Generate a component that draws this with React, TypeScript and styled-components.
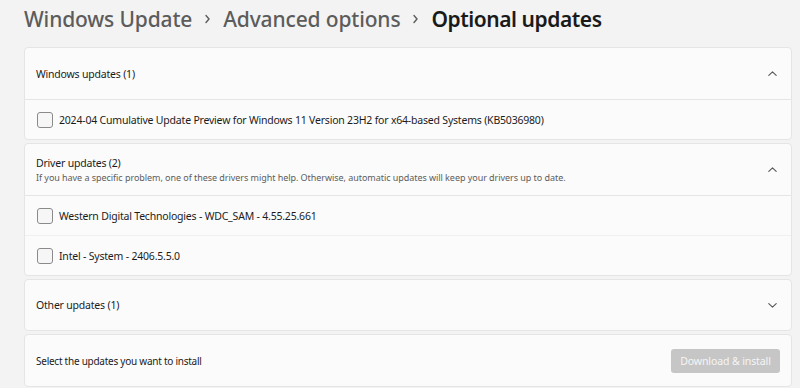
import styled, { createGlobalStyle } from "styled-components";

const GlobalStyle = createGlobalStyle`
  html, body {
    margin: 0;
    padding: 0;
    background: #f3f3f3;
  }
  body {
    font-family: "Noto Sans", "Open Sans", sans-serif;
    color: #1b1b1b;
  }
`;

const Page = styled.div`
  width: 800px;
  height: 388px;
  overflow: hidden;
  box-sizing: border-box;
  padding: 0 8px 0 24px;
  display: flex;
  flex-direction: column;
  gap: 3px;
  & > * {
    flex-shrink: 0;
  }
`;

const Breadcrumb = styled.h1`
  margin: 0;
  height: 44px;
  display: flex;
  align-items: center;
  gap: 12px;
  font-size: 21px;
  font-weight: 500;
  padding-bottom: 6px;
  box-sizing: border-box;
`;

const Crumb = styled.span<{ $current?: boolean }>`
  color: ${(p) => (p.$current ? "#1a1a1a" : "#5c5c5c")};
  font-weight: ${(p) => (p.$current ? 600 : 500)};
  letter-spacing: ${(p) => (p.$current ? "-0.45px" : "-0.15px")};
`;

const Separator = styled.span`
  display: flex;
  align-items: center;
`;

const Card = styled.section`
  background: #fbfbfb;
  border: 1px solid #e5e5e5;
  border-radius: 4px;
  box-sizing: border-box;
`;

const CardHeader = styled.div<{ $open?: boolean; $height: number }>`
  height: ${(p) => p.$height}px;
  display: flex;
  align-items: center;
  justify-content: space-between;
  padding: 0 14px 0 11px;
  box-sizing: border-box;
  border-bottom: ${(p) => (p.$open ? "1px solid #e5e5e5" : "none")};
`;

const HeaderText = styled.div`
  display: flex;
  flex-direction: column;
  gap: 1px;
`;

const Title = styled.div`
  font-size: 10.5px;
  letter-spacing: -0.2px;
  color: #1b1b1b;
`;

const Subtitle = styled.div`
  font-size: 9px;
  letter-spacing: -0.05px;
  color: #5d5d5d;
`;

const Row = styled.label`
  height: 39px;
  display: flex;
  align-items: center;
  gap: 6px;
  padding: 0 12px;
  font-size: 10.5px;
  letter-spacing: -0.2px;
  color: #1b1b1b;
  & + & {
    border-top: 1px solid #f0f0f0;
  }
`;

const Box = styled.span`
  width: 14px;
  height: 14px;
  border: 1px solid #8a8a8a;
  border-radius: 3px;
  background: #f6f6f6;
  flex-shrink: 0;
`;

const Footer = styled.div`
  height: 51px;
  display: flex;
  align-items: center;
  justify-content: space-between;
  padding: 0 11px;
  font-size: 10px;
  letter-spacing: -0.25px;
  color: #1b1b1b;
`;

const Button = styled.button`
  width: 109px;
  height: 24px;
  margin-top: 1px;
  border: none;
  border-radius: 3px;
  background: #c6c6c6;
  color: #f5f5f5;
  font-family: inherit;
  font-size: 10.5px;
  letter-spacing: -0.1px;
  padding: 0;
`;

function Chevron({ up }: { up: boolean }) {
  return (
    <svg width="9" height="5" viewBox="0 0 9 5" fill="none">
      <path
        d={up ? "M0.8 4.3 L4.5 0.8 L8.2 4.3" : "M0.8 0.7 L4.5 4.2 L8.2 0.7"}
        stroke="#555"
        strokeWidth="1.1"
        strokeLinecap="round"
        strokeLinejoin="round"
      />
    </svg>
  );
}

function Arrow() {
  return (
    <svg width="7" height="10" viewBox="0 0 7 10" fill="none">
      <path d="M2 1.5 L5 5 L2 8.5" stroke="#5c5c5c" strokeWidth="1.4" strokeLinecap="round" strokeLinejoin="round" />
    </svg>
  );
}

type Section = {
  title: string;
  subtitle?: string;
  open: boolean;
  items: string[];
};

const sections: Section[] = [
  {
    title: "Windows updates (1)",
    open: true,
    items: ["2024-04 Cumulative Update Preview for Windows 11 Version 23H2 for x64-based Systems (KB5036980)"],
  },
  {
    title: "Driver updates (2)",
    subtitle:
      "If you have a specific problem, one of these drivers might help. Otherwise, automatic updates will keep your drivers up to date.",
    open: true,
    items: ["Western Digital Technologies - WDC_SAM - 4.55.25.661", "Intel - System - 2406.5.5.0"],
  },
  { title: "Other updates (1)", open: false, items: [] },
];

export default function App() {
  return (
    <>
      <GlobalStyle />
      <Page>
        <Breadcrumb>
          <Crumb>Windows Update</Crumb>
          <Separator>
            <Arrow />
          </Separator>
          <Crumb>Advanced options</Crumb>
          <Separator>
            <Arrow />
          </Separator>
          <Crumb $current>Optional updates</Crumb>
        </Breadcrumb>
        {sections.map((s) => (
          <Card key={s.title}>
            <CardHeader $open={s.open} $height={s.open ? 52 : 50}>
              <HeaderText>
                <Title>{s.title}</Title>
                {s.subtitle && <Subtitle>{s.subtitle}</Subtitle>}
              </HeaderText>
              <Chevron up={s.open} />
            </CardHeader>
            {s.open &&
              s.items.map((item) => (
                <Row key={item}>
                  <Box />
                  {item}
                </Row>
              ))}
          </Card>
        ))}
        <Card>
          <Footer>
            Select the updates you want to install
            <Button disabled>Download &amp; install</Button>
          </Footer>
        </Card>
      </Page>
    </>
  );
}
